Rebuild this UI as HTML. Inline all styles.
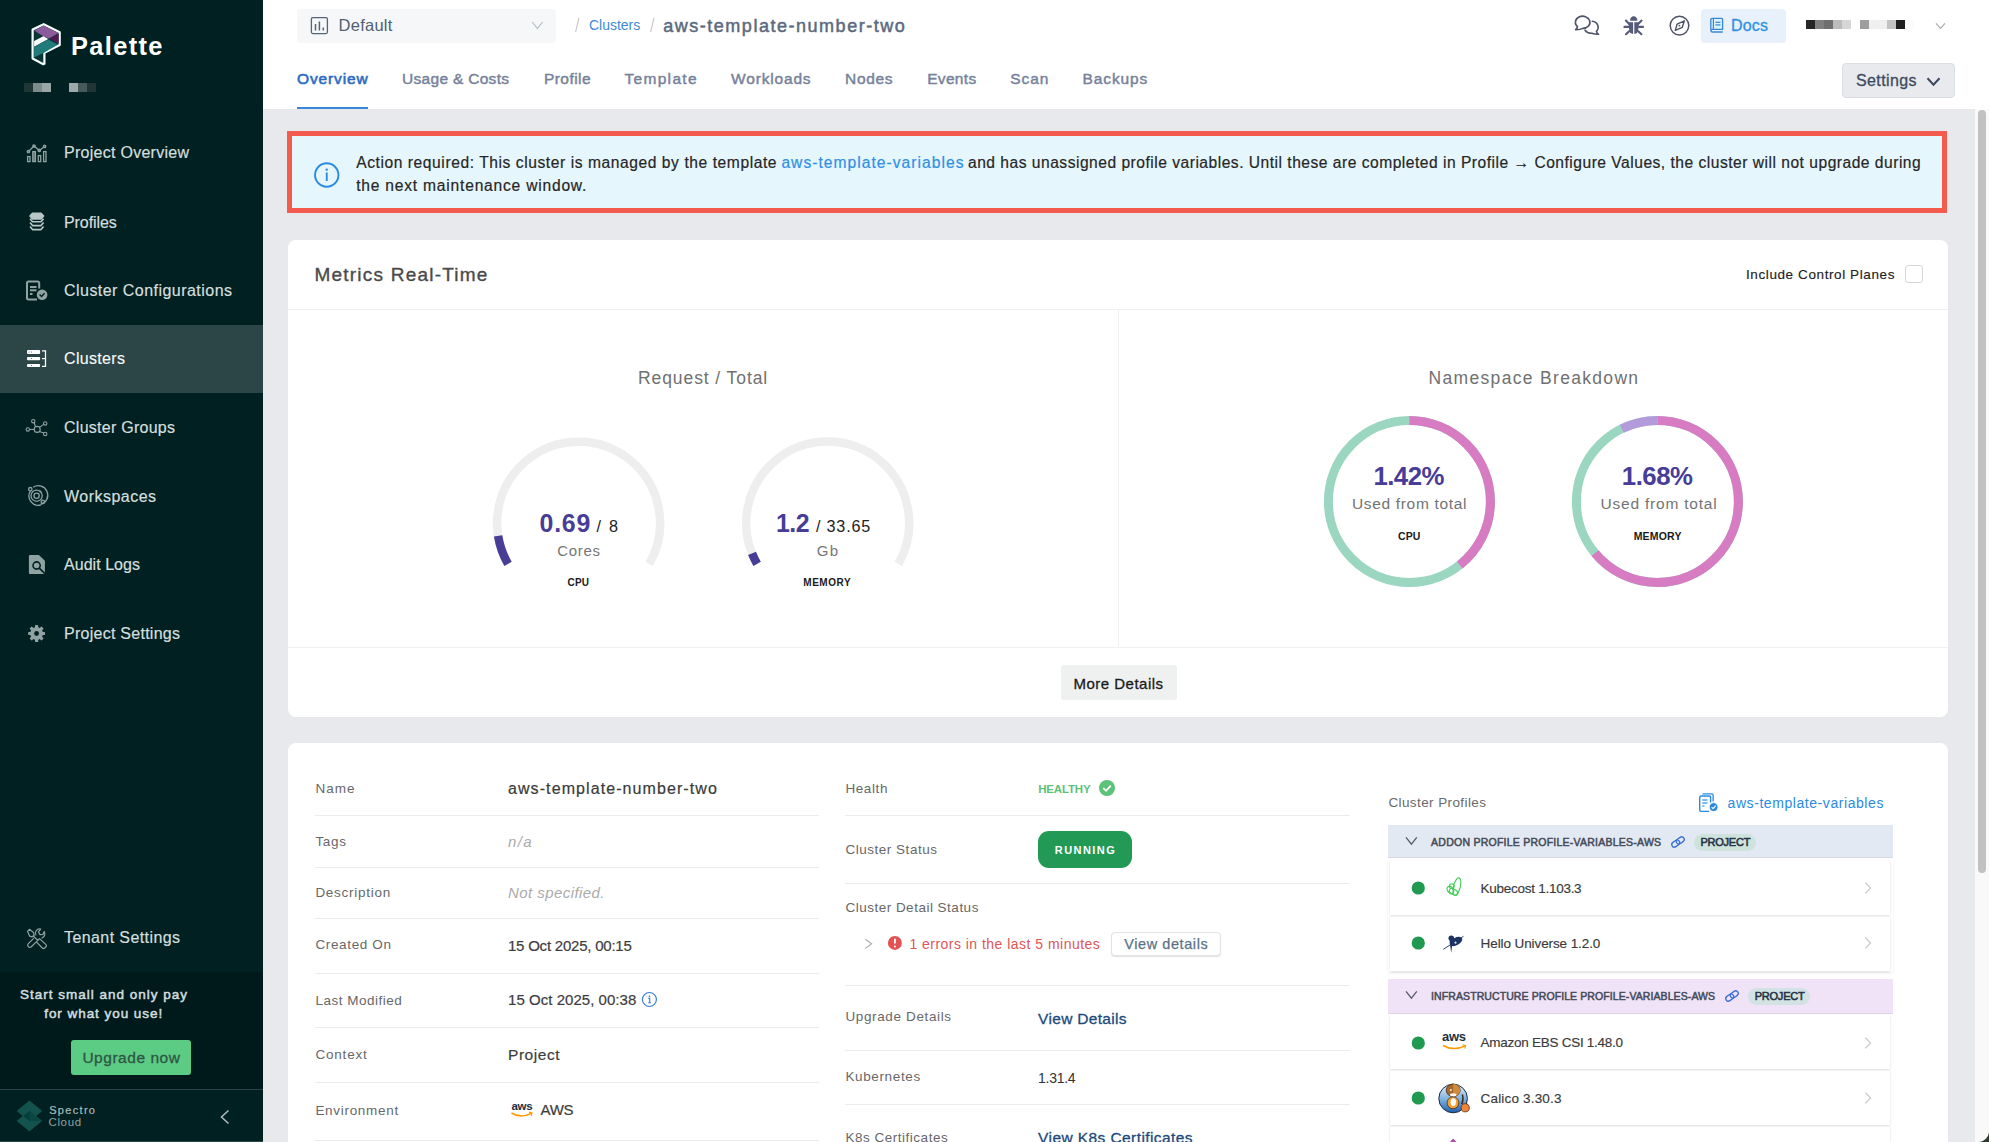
<!DOCTYPE html>
<html><head><meta charset="utf-8">
<style>
*{box-sizing:border-box;margin:0;padding:0}
html,body{width:1989px;height:1142px;overflow:hidden}
body{font-family:"Liberation Sans",sans-serif;background:#e8e9ed;position:relative}
.a{position:absolute;white-space:nowrap}
.t{line-height:20px}
#sb{left:0;top:0;width:263px;height:1142px;background:#012022}
.nav{color:#d3dfdd;font-size:16px;left:64px;margin-top:1px;-webkit-text-stroke:.2px #d3dfdd}
#hdr{left:263px;top:0;width:1726px;height:109px;background:#fff}
.tab{font-size:15.5px;color:#76829a;-webkit-text-stroke:.45px #76829a;top:69px}
.card{background:#fff;border-radius:8px}
.lbl{font-size:14px;color:#6b6b6b}
.val{font-size:15.5px;color:#3d3d3d}
.hr{height:1px;background:#ececec}
</style></head><body>

<!-- SIDEBAR -->
<div id="sb" class="a">
  <div class="a" style="left:0;top:325px;width:263px;height:68px;background:#2c4547"></div>
  <div class="a" style="left:0;top:972px;width:263px;height:117px;background:#001a1c"></div>
  <div class="a" style="left:0;top:1089px;width:263px;height:1px;background:#2b4546"></div>
  <svg class="a" style="left:0;top:0" width="263" height="1142" viewBox="0 0 263 1142">
    <!-- logo -->
    <polygon points="43.7,24.2 59.7,32.3 59.7,44.9 44.4,52.8 44.4,63.8 43.3,64.2 32.6,58.5 32.6,29.4" fill="#0b3436" stroke="#f4ffff" stroke-width="2.2" stroke-linejoin="round"></polygon>
    <polygon points="34.1,30.5 43.7,25.5 58.6,33.1 49,38.6 43.3,36.2" fill="#8a5c9c"></polygon>
    <polygon points="58.6,33.6 58.6,43.6 49.6,38.8" fill="#521a55"></polygon>
    <polygon points="34.1,41 43.3,36.2 48.3,38.9 34.1,46.8" fill="#fbffff"></polygon>
    <polygon points="34.1,47.1 48.3,39.5 58,44.5 44.4,52.4 34.1,57.6" fill="#217b7a"></polygon>
    <!-- project overview -->
    <g fill="none" stroke="#8fa3a3" stroke-width="1.3">
      <rect x="27.6" y="156.6" width="2.4" height="5"></rect>
      <rect x="32.8" y="151.6" width="2.6" height="10" fill="#5c7373"></rect>
      <rect x="38.3" y="155.6" width="2.4" height="6"></rect>
      <rect x="43.6" y="151.6" width="2.4" height="10"></rect>
      <polyline points="28.4,151.6 34,146 39.3,150.4 44.6,146.4"></polyline>
      <circle cx="28.4" cy="151.6" r="1.2"></circle><circle cx="34" cy="146" r="1.2"></circle><circle cx="39.3" cy="150.4" r="1.2"></circle><circle cx="44.6" cy="146.4" r="1.2"></circle>
    </g>
    <!-- profiles -->
    <g fill="none" stroke="#b9c7c6" stroke-width="1.6" stroke-linejoin="round">
      <polygon points="32.5,213.3 41,213.3 43.6,216 41,219 32.5,219 30,216" fill="#b9c7c6"></polygon>
      <polyline points="30,218.8 32.5,221.8 41,221.8 43.6,218.8"></polyline>
      <polyline points="30,222.6 32.5,225.6 41,225.6 43.6,222.6"></polyline>
      <polyline points="30,226.4 32.5,229.6 41,229.6 43.6,226.4"></polyline>
    </g>
    <!-- cluster configurations -->
    <g stroke="#8fa3a3" fill="none" stroke-width="2">
      <path d="M39.2,288.5 V283 a1.5,1.5 0 0 0 -1.5,-1.5 H28.5 a1.5,1.5 0 0 0 -1.5,1.5 V298 a1.5,1.5 0 0 0 1.5,1.5 H37"></path>
      <line x1="30" y1="287" x2="36.5" y2="287"></line><line x1="30" y1="290.3" x2="36.5" y2="290.3"></line><line x1="30" y1="294" x2="32.5" y2="294"></line>
    </g>
    <circle cx="42.1" cy="294.7" r="5.3" fill="#8fa3a3"></circle>
    <polyline points="39.6,294.6 41.5,296.5 44.6,293.2" fill="none" stroke="#012022" stroke-width="1.4"></polyline>
    <!-- clusters -->
    <g fill="#ffffff">
      <rect x="27" y="350.1" width="13.1" height="3.9" rx="1"></rect>
      <rect x="27" y="356.9" width="13.1" height="3.3" rx="1"></rect>
      <rect x="27" y="363.9" width="13.1" height="3.1" rx="1"></rect>
    </g>
    <g fill="#2c4547"><circle cx="29" cy="352" r=".5"></circle><circle cx="31.4" cy="352" r=".5"></circle><circle cx="31.4" cy="358.5" r=".5"></circle><circle cx="31.4" cy="365.5" r=".5"></circle></g>
    <polyline points="42,350.8 45.5,350.8 45.5,366.4 42,366.4" fill="none" stroke="#fff" stroke-width="1.3"></polyline>
    <line x1="42" y1="358.6" x2="45.5" y2="358.6" stroke="#fff" stroke-width="1.2"></line>
    <!-- cluster groups -->
    <g fill="none" stroke="#8fa3a3" stroke-width="1.1">
      <circle cx="37.2" cy="429.4" r="3"></circle>
      <circle cx="27.8" cy="429.4" r="1.7"></circle><circle cx="33.3" cy="421.2" r="1.7"></circle><circle cx="45.2" cy="423.4" r="1.7"></circle><circle cx="45.2" cy="434" r="1.7"></circle>
      <line x1="29.5" y1="429.4" x2="34.2" y2="429.4"></line><line x1="34.1" y1="422.8" x2="35.6" y2="426.8"></line><line x1="43.8" y1="424.4" x2="39.4" y2="427.4"></line><line x1="39.5" y1="431.5" x2="43.8" y2="433"></line>
    </g>
    <!-- workspaces -->
    <g fill="none" stroke="#8fa3a3" stroke-width="1.3">
      <path d="M33.2,487.3 A9.4,9.4 0 1 1 40.5,504.3"></path>
      <path d="M30.5,490.8 A9.4,9.4 0 0 0 40.8,505"></path>
      <circle cx="36.6" cy="495.7" r="5.6"></circle>
      <circle cx="36.6" cy="495.7" r="2.6"></circle>
      <circle cx="30.3" cy="489.2" r="1.7"></circle><circle cx="42.8" cy="501.8" r="1.7"></circle>
    </g>
    <circle cx="40.3" cy="491.5" r="1.1" fill="#8fa3a3"></circle>
    <!-- audit logs -->
    <path d="M30,554.9 H38.9 L44.9,560.8 V572.7 L43.5,574.1 H30 a1.2,1.2 0 0 1 -1.1,-1.2 V556 a1.2,1.2 0 0 1 1.1,-1.1 Z" fill="#8fa3a3"></path>
    <circle cx="36.6" cy="565.5" r="3.6" fill="none" stroke="#012022" stroke-width="1.6"></circle>
    <line x1="39.2" y1="568.1" x2="44.5" y2="573.2" stroke="#012022" stroke-width="1.6"></line>
    <!-- gear -->
    <g transform="translate(36.6,633.5)" fill="#8fa3a3">
      <circle r="6.4"></circle>
      <g id="teeth">
        <rect x="-1.6" y="-8.4" width="3.2" height="3.5" rx=".5"></rect>
        <rect x="-1.6" y="-8.4" width="3.2" height="3.5" rx=".5" transform="rotate(45)"></rect>
        <rect x="-1.6" y="-8.4" width="3.2" height="3.5" rx=".5" transform="rotate(90)"></rect>
        <rect x="-1.6" y="-8.4" width="3.2" height="3.5" rx=".5" transform="rotate(135)"></rect>
        <rect x="-1.6" y="-8.4" width="3.2" height="3.5" rx=".5" transform="rotate(180)"></rect>
        <rect x="-1.6" y="-8.4" width="3.2" height="3.5" rx=".5" transform="rotate(225)"></rect>
        <rect x="-1.6" y="-8.4" width="3.2" height="3.5" rx=".5" transform="rotate(270)"></rect>
        <rect x="-1.6" y="-8.4" width="3.2" height="3.5" rx=".5" transform="rotate(315)"></rect>
      </g>
      <circle r="2.4" fill="#012022"></circle>
    </g>
    <!-- tenant settings -->
    <g fill="none" stroke="#8fa3a3" stroke-width="1.2" stroke-linejoin="round" stroke-linecap="round">
      <path d="M27.6,931.4 L29.4,929.3 L33.5,932.5 L34.2,935 L32.2,936.9 L29.7,936.2 Z"></path>
      <line x1="33.2" y1="936" x2="37.8" y2="940.3"></line>
      <path d="M37.8,940.3 L39.5,938.6 L46,944.6 a1.6,1.6 0 0 1 0,2.2 L44.6,948 a1.6,1.6 0 0 1 -2.2,0 L36.3,941.8 Z"></path>
      <path d="M35.8,934.9 a4.2,4.2 0 0 1 4.9,-5.8 l-2.3,2.8 l1.6,2.7 l3,-.3 l1.2,-2.8 a4.4,4.4 0 0 1 -2.3,6.5"></path>
      <path d="M33.4,938.6 L28.3,943.6 a2.2,2.2 0 0 0 3,3.2 L35.8,942.4"></path>
    </g>
    <!-- spectro cloud logo -->
    <polygon points="29.4,1101 41.6,1110.9 29.4,1120.9 17.2,1110.9" fill="#13524f" stroke="#13524f" stroke-width="1" stroke-linejoin="round"></polygon>
    <polygon points="29.4,1111 41.6,1120.9 29.4,1130.9 17.2,1120.9" fill="#13524f" stroke="#13524f" stroke-width="1" stroke-linejoin="round"></polygon>
    <polygon points="17.2,1110.9 23.3,1115.9 29.4,1111 35.5,1115.9 29.4,1120.9" fill="#043f3d"></polygon>
    <polygon points="29.4,1111 35.5,1115.9 41.6,1120.9 29.4,1120.9" fill="#0a4744"></polygon>
    <polyline points="228.5,1110.5 221.5,1117 228.5,1123.5" fill="none" stroke="#a9b9b8" stroke-width="1.6"></polyline>
  </svg>
  <div class="a t" style="left: 71px; top: 34px; line-height: 24px; font-size: 25.4px; font-weight: bold; color: rgb(255, 255, 255); letter-spacing: 1.372px;">Palette</div>
  <div class="a" style="left:24px;top:83px;width:9px;height:9px;background:#1f3536"></div>
  <div class="a" style="left:33px;top:83px;width:9px;height:9px;background:#7d8b8b"></div>
  <div class="a" style="left:42px;top:83px;width:9px;height:9px;background:#9aa5a5"></div>
  <div class="a" style="left:69px;top:83px;width:9px;height:9px;background:#9ea9a9"></div>
  <div class="a" style="left:78px;top:83px;width:9px;height:9px;background:#475a5b"></div>
  <div class="a" style="left:87px;top:83px;width:9px;height:9px;background:#1f3536"></div>
  <div class="a t nav" style="top: 142.4px; letter-spacing: 0.272px;">Project Overview</div>
  <div class="a t nav" style="top: 211.5px; letter-spacing: -0.08px;">Profiles</div>
  <div class="a t nav" style="top: 279.5px; letter-spacing: 0.462px;">Cluster Configurations</div>
  <div class="a t nav" style="top: 348.3px; color: rgb(255, 255, 255); letter-spacing: 0.33px;">Clusters</div>
  <div class="a t nav" style="top: 417px; letter-spacing: 0.262px;">Cluster Groups</div>
  <div class="a t nav" style="top: 485.6px; letter-spacing: 0.474px;">Workspaces</div>
  <div class="a t nav" style="top: 554.3px; letter-spacing: 0.043px;">Audit Logs</div>
  <div class="a t nav" style="top: 622.5px; letter-spacing: 0.263px;">Project Settings</div>
  <div class="a t nav" style="top: 927.3px; letter-spacing: 0.407px;">Tenant Settings</div>
  <div class="a t" style="left: 20px; top: 985.3px; font-size: 13.5px; color: rgb(211, 221, 221); -webkit-text-stroke: 0.5px rgb(211, 221, 221); letter-spacing: 0.997px;">Start small and only pay</div>
  <div class="a t" style="left: 44.2px; top: 1004px; font-size: 13.5px; color: rgb(211, 221, 221); -webkit-text-stroke: 0.5px rgb(211, 221, 221); letter-spacing: 0.949px;">for what you use!</div>
  <div class="a" style="left:71px;top:1040px;width:120px;height:35px;background:#5ccb84;border-radius:3px"></div>
  <div class="a t" style="left: 82.4px; top: 1047.5px; font-size: 15.5px; color: rgb(44, 86, 69); -webkit-text-stroke: 0.3px rgb(44, 86, 69); letter-spacing: 0.53px;">Upgrade now</div>
  <div class="a t" style="left: 49.2px; top: 1100.2px; font-size: 11px; color: rgb(168, 188, 187); -webkit-text-stroke: 0.2px rgb(168, 188, 187); letter-spacing: 1.313px;">Spectro</div>
  <div class="a t" style="left: 48.4px; top: 1112.25px; font-size: 11.5px; color: rgb(142, 163, 162); letter-spacing: 0.684px;">Cloud</div>
  <div class="a" style="left:0;top:1141px;width:263px;height:1px;background:#2a4846"></div>
</div>

<!-- HEADER -->
<div id="hdr" class="a"></div>
<div class="a" style="left:297px;top:9px;width:259px;height:34px;background:#f5f7f9;border-radius:3px"></div>
<svg class="a" style="left:263px;top:0" width="1726" height="109" viewBox="263 0 1726 109">
  <!-- default icon -->
  <rect x="311.4" y="17.6" width="16" height="16" rx="1.5" fill="none" stroke="#56637a" stroke-width="1.3"></rect>
  <line x1="315.5" y1="24" x2="315.5" y2="30.5" stroke="#56637a" stroke-width="1.5"></line>
  <line x1="319.4" y1="21.5" x2="319.4" y2="30.5" stroke="#56637a" stroke-width="1.5"></line>
  <line x1="323.3" y1="27.5" x2="323.3" y2="30.5" stroke="#56637a" stroke-width="1.5"></line>
  <polyline points="532.2,22 537.4,28.6 542.6,22" fill="none" stroke="#b5bcc6" stroke-width="1.2"></polyline>
  <line x1="579" y1="17.7" x2="575.6" y2="32.1" stroke="#c9c9c9" stroke-width="1.2"></line>
  <line x1="654" y1="17.7" x2="650.6" y2="32.1" stroke="#c9c9c9" stroke-width="1.2"></line>
  <!-- chat -->
  <g fill="none" stroke="#4e5468" stroke-width="1.6" stroke-linejoin="round" stroke-linecap="round">
    <path d="M1577.5,26.6 A7.3,6.1 0 1 1 1582.8,28.4 Q1580,29.8 1575.6,29.7 Q1577.2,28.3 1577.5,26.6 Z"></path>
    <path d="M1592.3,21.2 A6.4,6.1 0 0 1 1596.4,31.4 Q1597,33.2 1598.6,34.3 Q1594.4,34.4 1592,33.3 Q1587.5,33.5 1585,30.2"></path>
  </g>
  <!-- bug -->
  <g fill="#555a78">
    <path d="M1630,20.8 A3.7,4.6 0 0 1 1637.4,20.8 Z"></path>
    <path d="M1628.4,22.2 H1633.1 V33.9 L1630.2,33 Q1628.5,28.5 1628.4,22.2 Z"></path>
    <path d="M1639,22.2 H1634.3 V33.9 L1637.2,33 Q1638.9,28.5 1639,22.2 Z"></path>
  </g>
  <g stroke="#555a78" stroke-width="2.1" stroke-linecap="round">
    <line x1="1625.9" y1="20.6" x2="1629.2" y2="23.9"></line><line x1="1641.5" y1="20.6" x2="1638.2" y2="23.9"></line>
    <line x1="1624.4" y1="26.9" x2="1628.4" y2="26.9"></line><line x1="1643" y1="26.9" x2="1639" y2="26.9"></line>
    <line x1="1626" y1="34.2" x2="1629.4" y2="31"></line><line x1="1641.4" y1="34.2" x2="1638" y2="31"></line>
  </g>
  <!-- compass -->
  <circle cx="1679.5" cy="25.6" r="9.3" fill="none" stroke="#4e5468" stroke-width="1.5"></circle>
  <path d="M1684.4,20.8 L1682.3,27.3 L1675.3,30.4 L1677.1,24.2 Z" fill="none" stroke="#4e5468" stroke-width="1.4" stroke-linejoin="round"></path>
  <circle cx="1679.5" cy="25.6" r=".9" fill="#4e5468"></circle>
</svg>
<div class="a" style="left:1701px;top:9px;width:85px;height:34px;background:#e8f0fb;border-radius:4px"></div>
<svg class="a" style="left:1705px;top:14px" width="24" height="24" viewBox="1705 14 24 24">
  <path d="M1710.8,30.4 V19.6 a1.2,1.2 0 0 1 1.2,-1.2 H1721.4 a1.2,1.2 0 0 1 1.2,1.2 V29.4 H1712.3 a1.3,1.3 0 0 0 0,2.6 H1722.8" fill="#d7f2fd" stroke="#3a86d0" stroke-width="1.3"></path>
  <line x1="1713.4" y1="18.6" x2="1713.4" y2="29.2" stroke="#3a86d0" stroke-width="1.2"></line>
  <line x1="1715.4" y1="22.3" x2="1720.4" y2="22.3" stroke="#3a86d0" stroke-width="1.2"></line>
  <line x1="1715.4" y1="24.9" x2="1720.4" y2="24.9" stroke="#4a96e0" stroke-width="1.4"></line>
</svg>
<div class="a t" style="left: 1731px; top: 16.4px; font-size: 16px; color: rgb(48, 144, 224); -webkit-text-stroke: 0.3px rgb(48, 144, 224); letter-spacing: 0.182px;">Docs</div>
<div class="a" style="left:1806px;top:20px;width:9px;height:9px;background:#252525"></div>
<div class="a" style="left:1815px;top:20px;width:9px;height:9px;background:#7f7f7f"></div>
<div class="a" style="left:1824px;top:20px;width:9px;height:9px;background:#707070"></div>
<div class="a" style="left:1833px;top:20px;width:9px;height:9px;background:#bcbcbc"></div>
<div class="a" style="left:1842px;top:20px;width:9px;height:9px;background:#d6d6d6"></div>
<div class="a" style="left:1860px;top:20px;width:9px;height:9px;background:#9d9d9d"></div>
<div class="a" style="left:1869px;top:20px;width:18px;height:9px;background:#efefef"></div>
<div class="a" style="left:1887px;top:20px;width:9px;height:9px;background:#c2c2c2"></div>
<div class="a" style="left:1896px;top:20px;width:9px;height:9px;background:#1f1f1f"></div>
<div class="a" style="left:1905px;top:20px;width:9px;height:9px;background:#fbfbfb"></div>
<svg class="a" style="left:1930px;top:18px" width="20" height="16" viewBox="1930 18 20 16">
  <polyline points="1936,23.4 1940.5,28.4 1945,23.4" fill="none" stroke="#a8a8a8" stroke-width="1.1"></polyline>
</svg>
<div class="a t" style="left: 338.6px; top: 15.3px; font-size: 16.5px; color: rgb(83, 95, 115); letter-spacing: 0.236px;">Default</div>
<div class="a t" style="left: 589px; top: 15.4px; font-size: 14px; color: rgb(63, 138, 216); letter-spacing: -0.023px;">Clusters</div>
<div class="a t" style="left: 663.2px; top: 15.8px; font-size: 18px; color: rgb(91, 106, 128); -webkit-text-stroke: 0.5px rgb(91, 106, 128); letter-spacing: 1.524px;">aws-template-number-two</div>
<!-- tabs -->
<div class="a t tab" style="left: 297px; color: rgb(43, 108, 196); -webkit-text-stroke: 0.6px rgb(43, 108, 196); letter-spacing: 0.884px;">Overview</div>
<div class="a" style="left:297px;top:107px;width:71px;height:2px;background:#3789d8"></div>
<div class="a t tab" style="left: 402px; letter-spacing: 0.301px;">Usage &amp; Costs</div>
<div class="a t tab" style="left: 544px; letter-spacing: 0.427px;">Profile</div>
<div class="a t tab" style="left: 624.4px; letter-spacing: 1.328px;">Template</div>
<div class="a t tab" style="left: 731px; letter-spacing: 0.833px;">Workloads</div>
<div class="a t tab" style="left: 845px; letter-spacing: 0.697px;">Nodes</div>
<div class="a t tab" style="left: 927.2px; letter-spacing: 0.322px;">Events</div>
<div class="a t tab" style="left: 1010.2px; letter-spacing: 0.985px;">Scan</div>
<div class="a t tab" style="left: 1082.6px; letter-spacing: 0.874px;">Backups</div>
<div class="a" style="left:1842px;top:63px;width:113px;height:35px;background:#e8eaee;border:1px solid #dadde2;border-radius:4px"></div>
<div class="a t" style="left: 1856px; top: 70.5px; font-size: 16px; color: rgb(61, 74, 92); -webkit-text-stroke: 0.3px rgb(61, 74, 92); letter-spacing: 0.384px;">Settings</div>
<svg class="a" style="left:1920px;top:70px" width="26" height="22" viewBox="1920 70 26 22">
  <polyline points="1927.5,78.3 1933.5,84.8 1939.5,78.3" fill="none" stroke="#3d4a5c" stroke-width="2"></polyline>
</svg>

<!-- scrollbar -->
<div class="a" style="left:1975px;top:109px;width:14px;height:1033px;background:#f9f9f9"></div>
<div class="a" style="left:1978px;top:110px;width:8px;height:763px;background:#c1c1c1;border-radius:4px"></div>

<!-- ALERT -->
<div class="a" style="left:287px;top:131px;width:1660px;height:82px;border:5px solid #f25b4e;background:#e6f6fd"></div>
<svg class="a" style="left:310px;top:159px" width="34" height="34" viewBox="310 159 34 34">
  <circle cx="326.75" cy="175" r="11.7" fill="none" stroke="#2a8be0" stroke-width="1.9"></circle>
  <circle cx="326.75" cy="169.6" r="1.2" fill="#2a8be0"></circle>
  <line x1="326.75" y1="172.5" x2="326.75" y2="181" stroke="#2a8be0" stroke-width="1.9"></line>
</svg>
<div class="a t" style="left: 356.2px; top: 152.75px; font-size: 15.6px; color: rgb(38, 38, 38); -webkit-text-stroke: 0.2px rgb(38, 38, 38); letter-spacing: 0.571px;">Action required: This cluster is managed by the template</div>
<div class="a t" style="left: 781.4px; top: 152.75px; font-size: 15.6px; color: rgb(47, 143, 230); -webkit-text-stroke: 0.2px rgb(47, 143, 230); letter-spacing: 1.036px;">aws-template-variables</div>
<div class="a t" style="left: 968px; top: 152.75px; font-size: 15.6px; color: rgb(38, 38, 38); -webkit-text-stroke: 0.2px rgb(38, 38, 38); letter-spacing: 0.5px;">and has unassigned profile variables. Until these are completed in Profile → Configure Values, the cluster will not upgrade during</div>
<div class="a t" style="left: 356.2px; top: 175.85px; font-size: 15.6px; color: rgb(38, 38, 38); -webkit-text-stroke: 0.2px rgb(38, 38, 38); letter-spacing: 0.788px;">the next maintenance window.</div>

<!-- METRICS CARD -->
<div class="a card" style="left:288px;top:240px;width:1660px;height:477px"></div>
<div class="a" style="left:288px;top:309px;width:1660px;height:1px;background:#efefef"></div>
<div class="a" style="left:1118px;top:310px;width:1px;height:337px;background:#efefef"></div>
<div class="a" style="left:288px;top:647px;width:1660px;height:1px;background:#f1f1f1"></div>
<div class="a t" style="left: 314.4px; top: 265.1px; font-size: 19px; color: rgb(74, 74, 74); -webkit-text-stroke: 0.35px rgb(74, 74, 74); letter-spacing: 1.224px;">Metrics Real-Time</div>
<div class="a t" style="left: 1746px; top: 265.2px; font-size: 13.5px; color: rgb(34, 34, 34); -webkit-text-stroke: 0.15px rgb(34, 34, 34); letter-spacing: 0.598px;">Include Control Planes</div>
<div class="a" style="left:1905px;top:265px;width:18px;height:18px;border:1px solid #d6d6d6;border-radius:3px;background:#fff"></div>
<div class="a t" style="left: 638px; top: 367.9px; font-size: 17.5px; color: rgb(112, 112, 112); letter-spacing: 0.913px;">Request / Total</div>
<div class="a t" style="left: 1428.6px; top: 367.75px; font-size: 17.5px; color: rgb(112, 112, 112); letter-spacing: 1.317px;">Namespace Breakdown</div>
<svg class="a" style="left:288px;top:310px" width="1660" height="337" viewBox="288 310 1660 337">
  <path d="M508.02,563.95 A81.5,81.5 0 1 1 649.18,563.95" fill="none" stroke="#eeeeee" stroke-width="8.5"></path>
  <path d="M508.02,563.95 A81.5,81.5 0 0 1 498.10,535.95" fill="none" stroke="#473d97" stroke-width="8.5"></path>
  <path d="M757.12,563.85 A81.5,81.5 0 1 1 898.28,563.85" fill="none" stroke="#eeeeee" stroke-width="8.5"></path>
  <path d="M757.12,563.85 A81.5,81.5 0 0 1 752.03,553.37" fill="none" stroke="#473d97" stroke-width="8.5"></path>
  <circle cx="1409.4" cy="501.5" r="81" fill="none" stroke="#9ad6c0" stroke-width="9"></circle>
  <circle cx="1409.4" cy="501.5" r="81" fill="none" stroke="#d77cc3" stroke-width="9" stroke-dasharray="199.76 508.94" stroke-dashoffset="0.00" transform="rotate(-90 1409.4 501.5)"></circle>
  <circle cx="1657.4" cy="501.5" r="81" fill="none" stroke="#9ad6c0" stroke-width="9"></circle>
  <circle cx="1657.4" cy="501.5" r="81" fill="none" stroke="#d77cc3" stroke-width="9" stroke-dasharray="325.15 508.94" stroke-dashoffset="0.00" transform="rotate(-90 1657.4 501.5)"></circle>
  <circle cx="1657.4" cy="501.5" r="81" fill="none" stroke="#b39bdb" stroke-width="9" stroke-dasharray="37.60 508.94" stroke-dashoffset="-471.33" transform="rotate(-90 1657.4 501.5)"></circle>
</svg>
<div class="a t" style="left: 539.6px; top: 512.7px; font-size: 24.9px; font-weight: bold; color: rgb(71, 61, 151); letter-spacing: 0.749px;">0.69</div>
<div class="a t" style="left: 596.6px; top: 515.8px; font-size: 16.2px; color: rgb(34, 34, 34); letter-spacing: 1.65px;">/ 8</div>
<div class="a t" style="left: 557.2px; top: 541.15px; font-size: 15px; color: rgb(119, 119, 119); letter-spacing: 0.721px;">Cores</div>
<div class="a t" style="left: 567.5px; top: 573.45px; font-size: 10px; font-weight: bold; color: rgb(26, 26, 26); letter-spacing: 0.188px;">CPU</div>
<div class="a t" style="left: 775.99px; top: 512.7px; font-size: 24.9px; font-weight: bold; color: rgb(71, 61, 151); letter-spacing: -0.498px;">1.2</div>
<div class="a t" style="left: 815.9px; top: 515.8px; font-size: 16.2px; color: rgb(34, 34, 34); letter-spacing: 0.814px;">/ 33.65</div>
<div class="a t" style="left: 816.7px; top: 541.15px; font-size: 15px; color: rgb(119, 119, 119); letter-spacing: 1.284px;">Gb</div>
<div class="a t" style="left: 803.3px; top: 573.45px; font-size: 10px; font-weight: bold; color: rgb(26, 26, 26); letter-spacing: 0.532px;">MEMORY</div>
<div class="a t" style="left: 1373.4px; top: 465.75px; font-size: 25.8px; font-weight: bold; color: rgb(71, 61, 151); letter-spacing: -0.516px;">1.42%</div>
<div class="a t" style="left: 1352px; top: 494.25px; font-size: 15.5px; color: rgb(115, 115, 115); letter-spacing: 0.664px;">Used from total</div>
<div class="a t" style="left: 1398px; top: 526.3px; font-size: 10.5px; font-weight: bold; color: rgb(26, 26, 26); letter-spacing: 0.064px;">CPU</div>
<div class="a t" style="left: 1621.85px; top: 465.75px; font-size: 25.8px; font-weight: bold; color: rgb(71, 61, 151); letter-spacing: -0.516px;">1.68%</div>
<div class="a t" style="left: 1600.6px; top: 494.25px; font-size: 15.5px; color: rgb(115, 115, 115); letter-spacing: 0.785px;">Used from total</div>
<div class="a t" style="left: 1633.7px; top: 526.3px; font-size: 10.5px; font-weight: bold; color: rgb(26, 26, 26); letter-spacing: 0.185px;">MEMORY</div>
<div class="a" style="left:1060.5px;top:665.2px;width:116.3px;height:34.7px;background:#eff0f0;border-radius:3px"></div>
<div class="a t" style="left: 1073.4px; top: 674.2px; font-size: 15px; color: rgb(26, 26, 26); -webkit-text-stroke: 0.3px rgb(26, 26, 26); letter-spacing: 0.5px;">More Details</div>

<!-- DETAILS CARD -->
<div class="a card" style="left:288px;top:743px;width:1660px;height:420px"></div>
<div class="a t" style="left: 315.4px; top: 779.2px; font-size: 13.5px; color: rgb(104, 104, 104); letter-spacing: 0.995px;">Name</div>
<div class="a t" style="left: 315.4px; top: 831.65px; font-size: 13.5px; color: rgb(104, 104, 104); letter-spacing: 0.69px;">Tags</div>
<div class="a t" style="left: 315.4px; top: 882.6px; font-size: 13.5px; color: rgb(104, 104, 104); letter-spacing: 0.727px;">Description</div>
<div class="a t" style="left: 315.4px; top: 935.15px; font-size: 13.5px; color: rgb(104, 104, 104); letter-spacing: 0.645px;">Created On</div>
<div class="a t" style="left: 315.4px; top: 990.5px; font-size: 13.5px; color: rgb(104, 104, 104); letter-spacing: 0.509px;">Last Modified</div>
<div class="a t" style="left: 315.4px; top: 1045.3px; font-size: 13.5px; color: rgb(104, 104, 104); letter-spacing: 0.811px;">Context</div>
<div class="a t" style="left: 315.4px; top: 1101.2px; font-size: 13.5px; color: rgb(104, 104, 104); letter-spacing: 0.7px;">Environment</div>
<div class="a hr" style="left:315px;top:815px;width:504px"></div>
<div class="a hr" style="left:315px;top:867px;width:504px"></div>
<div class="a hr" style="left:315px;top:918px;width:504px"></div>
<div class="a hr" style="left:315px;top:973px;width:504px"></div>
<div class="a hr" style="left:315px;top:1027px;width:504px"></div>
<div class="a hr" style="left:315px;top:1082px;width:504px"></div>
<div class="a hr" style="left:315px;top:1140px;width:504px"></div>
<div class="a t" style="left: 508px; top: 779.2px; font-size: 16px; color: rgb(58, 58, 58); -webkit-text-stroke: 0.2px rgb(58, 58, 58); letter-spacing: 1.084px;">aws-template-number-two</div>
<div class="a t" style="left: 508px; top: 831.8px; font-size: 15px; color: rgb(170, 170, 170); font-style: italic; letter-spacing: 1.37px;">n/a</div>
<div class="a t" style="left: 508px; top: 883px; font-size: 15px; color: rgb(170, 170, 170); font-style: italic; letter-spacing: 0.431px;">Not specified.</div>
<div class="a t" style="left: 508px; top: 935.6px; font-size: 15px; color: rgb(61, 61, 61); -webkit-text-stroke: 0.2px rgb(61, 61, 61); letter-spacing: -0.224px;">15 Oct 2025, 00:15</div>
<div class="a t" style="left: 508px; top: 990.25px; font-size: 15px; color: rgb(61, 61, 61); -webkit-text-stroke: 0.2px rgb(61, 61, 61); letter-spacing: 0.041px;">15 Oct 2025, 00:38</div>
<div class="a t" style="left: 508px; top: 1044.55px; font-size: 15.5px; color: rgb(61, 61, 61); -webkit-text-stroke: 0.2px rgb(61, 61, 61); letter-spacing: 0.542px;">Project</div>
<div class="a t" style="left: 540.6px; top: 1100.35px; font-size: 15px; color: rgb(61, 61, 61); -webkit-text-stroke: 0.2px rgb(61, 61, 61); letter-spacing: -0.3px;">AWS</div>
<svg class="a" style="left:500px;top:985px" width="80" height="140" viewBox="500 985 80 140">
  <circle cx="649.4" cy="999.5" r="7" fill="none" stroke="#3a7fd0" stroke-width="1.2"></circle>
  <circle cx="649.4" cy="996.2" r=".8" fill="#3a7fd0"></circle>
  <line x1="649.4" y1="998" x2="649.4" y2="1003" stroke="#3a7fd0" stroke-width="1.2"></line>
</svg>
<svg class="a" style="left:640px;top:990px" width="20" height="20" viewBox="640 990 20 20">
  <circle cx="649.4" cy="999.5" r="7" fill="none" stroke="#3a7fd0" stroke-width="1.2"></circle>
  <circle cx="649.4" cy="996.3" r=".85" fill="#3a7fd0"></circle>
  <path d="M648.3,998.4 H649.7 V1002.8 M648.2,1002.8 H650.9" fill="none" stroke="#3a7fd0" stroke-width="1.1"></path>
</svg>
<div class="a" style="left:511.4px;top:1100px;font-size:11.5px;line-height:12px;color:#232f3e;font-weight:bold;letter-spacing:-.3px">aws</div>
<svg class="a" style="left:508px;top:1110px" width="28" height="12" viewBox="508 1110 28 12">
  <path d="M511.5,1113 Q521,1119 531,1113.3" fill="none" stroke="#f90" stroke-width="1.5"></path>
  <path d="M529,1112.2 L532,1113 L531.2,1115.8" fill="none" stroke="#f90" stroke-width="1.2"></path>
</svg>
<div class="a t" style="left: 845.4px; top: 778.5px; font-size: 13.5px; color: rgb(104, 104, 104); letter-spacing: 0.594px;">Health</div>
<div class="a t" style="left: 845.4px; top: 839.7px; font-size: 13.5px; color: rgb(104, 104, 104); letter-spacing: 0.523px;">Cluster Status</div>
<div class="a t" style="left: 845.4px; top: 898.35px; font-size: 13.5px; color: rgb(104, 104, 104); letter-spacing: 0.497px;">Cluster Detail Status</div>
<div class="a t" style="left: 845.4px; top: 1007.35px; font-size: 13.5px; color: rgb(104, 104, 104); letter-spacing: 0.635px;">Upgrade Details</div>
<div class="a t" style="left: 845.4px; top: 1067.45px; font-size: 13.5px; color: rgb(104, 104, 104); letter-spacing: 0.637px;">Kubernetes</div>
<div class="a t" style="left: 845.4px; top: 1127.5px; font-size: 13.5px; color: rgb(104, 104, 104); letter-spacing: 0.517px;">K8s Certificates</div>
<div class="a hr" style="left:845px;top:815px;width:505px"></div>
<div class="a hr" style="left:845px;top:883px;width:505px"></div>
<div class="a hr" style="left:845px;top:985px;width:505px"></div>
<div class="a hr" style="left:845px;top:1050px;width:505px"></div>
<div class="a hr" style="left:845px;top:1104px;width:505px"></div>
<div class="a t" style="left: 1038.2px; top: 779px; font-size: 11.5px; color: rgb(92, 194, 122); font-weight: bold; letter-spacing: -0.159px;">HEALTHY</div>
<svg class="a" style="left:1095px;top:776px" width="24" height="24" viewBox="1095 776 24 24">
  <circle cx="1107" cy="788" r="8" fill="#5cc27a"></circle>
  <polyline points="1103.3,788.2 1106,790.8 1110.8,785.6" fill="none" stroke="#fff" stroke-width="1.8"></polyline>
</svg>
<div class="a" style="left:1038.2px;top:831px;width:93.6px;height:36.7px;background:#229a55;border-radius:11px"></div>
<div class="a t" style="left: 1054.8px; top: 840.1px; font-size: 11px; color: rgb(255, 255, 255); font-weight: bold; letter-spacing: 1.426px;">RUNNING</div>
<svg class="a" style="left:860px;top:930px" width="50" height="28" viewBox="860 930 50 28">
  <polyline points="865.3,939.2 871.6,943.8 865.3,948.4" fill="none" stroke="#aaaaaa" stroke-width="1.1"></polyline>
  <circle cx="894.9" cy="942.9" r="7" fill="#e25454"></circle>
  <line x1="894.9" y1="938.8" x2="894.9" y2="943.6" stroke="#fff" stroke-width="1.8"></line>
  <circle cx="894.9" cy="946.4" r="1" fill="#fff"></circle>
</svg>
<div class="a t" style="left: 909.4px; top: 934px; font-size: 14px; color: rgb(224, 85, 85); letter-spacing: 0.474px;">1 errors in the last 5 minutes</div>
<div class="a" style="left:1111px;top:931.7px;width:109.7px;height:24px;background:#fff;border:1px solid #e3e3e3;border-radius:4px;box-shadow:0 1px 1px rgba(0,0,0,.12)"></div>
<div class="a t" style="left: 1124.2px; top: 934px; font-size: 14.5px; color: rgb(91, 115, 135); -webkit-text-stroke: 0.25px rgb(91, 115, 135); letter-spacing: 0.581px;">View details</div>
<div class="a t" style="left: 1038.1px; top: 1008.5px; font-size: 15.5px; color: rgb(29, 74, 124); -webkit-text-stroke: 0.3px rgb(29, 74, 124); letter-spacing: 0.317px;">View Details</div>
<div class="a t" style="left: 1038.1px; top: 1067.85px; font-size: 14px; color: rgb(51, 51, 51); letter-spacing: -0.28px;">1.31.4</div>
<div class="a t" style="left: 1038.1px; top: 1127.9px; font-size: 15.5px; color: rgb(29, 74, 124); -webkit-text-stroke: 0.3px rgb(29, 74, 124); letter-spacing: 0.416px;">View K8s Certificates</div>
<div class="a t" style="left: 1388.4px; top: 793.2px; font-size: 13.5px; color: rgb(106, 106, 106); letter-spacing: 0.405px;">Cluster Profiles</div>
<div class="a t" style="left: 1727.6px; top: 793px; font-size: 14px; color: rgb(43, 138, 226); letter-spacing: 0.564px;">aws-template-variables</div>
<svg class="a" style="left:1695px;top:790px" width="24" height="26" viewBox="1695 790 24 26">
  <path d="M1702.5,793.8 H1711.8 a1.3,1.3 0 0 1 1.3,1.3 V801.5" fill="none" stroke="#2a8ae0" stroke-width="1.3"></path>
  <path d="M1709.3,811.4 H1701 a1.3,1.3 0 0 1 -1.3,-1.3 V797.3 a1.3,1.3 0 0 1 1.3,-1.3 H1709.3 a1.3,1.3 0 0 1 1.3,1.3 V802.5" fill="none" stroke="#2a8ae0" stroke-width="1.4"></path>
  <line x1="1702.3" y1="800" x2="1707.5" y2="800" stroke="#2a8ae0" stroke-width="1.2"></line>
  <line x1="1702.3" y1="803" x2="1707.5" y2="803" stroke="#2a8ae0" stroke-width="1.2"></line>
  <line x1="1702.3" y1="806" x2="1704.5" y2="806" stroke="#2a8ae0" stroke-width="1.2"></line>
  <circle cx="1713.6" cy="807.1" r="4.5" fill="#2a8ae0" stroke="#fff" stroke-width="1"></circle>
  <polyline points="1711.6,807.1 1713.1,808.6 1715.8,805.7" fill="none" stroke="#fff" stroke-width="1.1"></polyline>
</svg>
<div class="a" style="left:1388px;top:858.5px;width:504.7px;height:113px;box-shadow:0 1px 3px rgba(0,0,0,.08)"></div>
<div class="a" style="left:1388px;top:825.2px;width:504.7px;height:33.299999999999955px;background:#e3e9f2;box-shadow:inset 0 -1px 0 rgba(0,0,0,.06)"></div>
<svg class="a" style="left:1400px;top:832.25px" width="24" height="20" viewBox="1400 832.25 24 20">
  <polyline points="1406,837.65 1411.4,844.45 1416.8,837.65" fill="none" stroke="#555b6a" stroke-width="1.3"></polyline>
</svg>
<svg class="a" style="left:1669px;top:833.25px" width="20" height="18" viewBox="1669 833.25 20 18">
  <g fill="none" stroke="#3a6fd0" stroke-width="1.3" transform="rotate(-35 1678 842.25)">
    <rect x="1671" y="839.65" width="8.5" height="5.2" rx="2.6"></rect>
    <rect x="1676.5" y="839.65" width="8.5" height="5.2" rx="2.6"></rect>
  </g>
</svg>
<div class="a" style="left:1693.9px;top:833.85px;width:62.59999999999991px;height:17px;border-radius:8.5px;background:#cde3dc"></div>
<div class="a t" style="left: 1431.1px; top: 832.25px; font-size: 10.5px; color: rgb(69, 75, 89); -webkit-text-stroke: 0.5px rgb(69, 75, 89); letter-spacing: 0.244px;">ADDON PROFILE PROFILE-VARIABLES-AWS</div>
<div class="a t" style="left: 1700.4px; top: 832.25px; font-size: 11px; color: rgb(38, 50, 68); -webkit-text-stroke: 0.55px rgb(38, 50, 68); letter-spacing: -0.22px;">PROJECT</div>
<div class="a" style="left:1389.6px;top:860.9px;width:500.5px;height:54.30000000000007px;background:#fff;box-shadow:0 1px 2px rgba(0,0,0,.10),0 0 3px rgba(0,0,0,.05)"></div>
<svg class="a" style="left:1400px;top:868.3px" width="480" height="40" viewBox="1400 868.3 480 40">
  <circle cx="1418.3" cy="888.3" r="6.6" fill="#1f9a50"></circle>
  <polyline points="1865.3,883.0 1870.6,888.3 1865.3,893.5999999999999" fill="none" stroke="#c5c5c5" stroke-width="1.1"></polyline>
  <g fill="none" stroke="#3ecf55" stroke-width="1.1"><ellipse cx="1456.9" cy="886.9" rx="3.4" ry="9" transform="rotate(14 1456.9 886.9)"></ellipse><ellipse cx="1450.4" cy="890.3" rx="2.8" ry="4" transform="rotate(-35 1450.4 890.3)"></ellipse><ellipse cx="1453.6" cy="892.2" rx="4.6" ry="2.6" transform="rotate(28 1453.6 892.2)"></ellipse><circle cx="1451.8" cy="886.4" r="2.4"></circle></g>
</svg>
<div class="a t" style="left: 1480.6px; top: 878.9px; font-size: 13.5px; color: rgb(58, 58, 58); -webkit-text-stroke: 0.15px rgb(58, 58, 58); letter-spacing: -0.27px;">Kubecost 1.103.3</div>
<div class="a" style="left:1389.6px;top:917.3px;width:500.5px;height:53.700000000000045px;background:#fff;box-shadow:0 1px 2px rgba(0,0,0,.10),0 0 3px rgba(0,0,0,.05)"></div>
<svg class="a" style="left:1400px;top:923.3px" width="480" height="40" viewBox="1400 923.3 480 40">
  <circle cx="1418.3" cy="943.3" r="6.6" fill="#1f9a50"></circle>
  <polyline points="1865.3,938.0 1870.6,943.3 1865.3,948.5999999999999" fill="none" stroke="#c5c5c5" stroke-width="1.1"></polyline>
  <g fill="#1b3262"><ellipse cx="1456" cy="941.8" rx="6.8" ry="3.8" transform="rotate(-28 1456 941.8)"></ellipse><circle cx="1451.3" cy="938.6" r="2.8"></circle><path d="M1449.5,941 L1452.8,941 L1451.2,953 Z"></path></g><line x1="1443.3" y1="949.6" x2="1463.5" y2="936.6" stroke="#1b3262" stroke-width=".9"></line><circle cx="1455.5" cy="943" r="1.1" fill="#cfe0f0"></circle>
</svg>
<div class="a t" style="left: 1480.6px; top: 933.9px; font-size: 13.5px; color: rgb(58, 58, 58); -webkit-text-stroke: 0.15px rgb(58, 58, 58); letter-spacing: -0.098px;">Hello Universe 1.2.0</div>
<div class="a" style="left:1388px;top:979px;width:504.7px;height:34.700000000000045px;background:#f0e3f8;box-shadow:inset 0 -1px 0 rgba(0,0,0,.06)"></div>
<svg class="a" style="left:1400px;top:986px" width="24" height="20" viewBox="1400 986 24 20">
  <polyline points="1406,991.4 1411.4,998.2 1416.8,991.4" fill="none" stroke="#555b6a" stroke-width="1.3"></polyline>
</svg>
<svg class="a" style="left:1723.2px;top:987px" width="20" height="18" viewBox="1723.2 987 20 18">
  <g fill="none" stroke="#3a6fd0" stroke-width="1.3" transform="rotate(-35 1732.2 996)">
    <rect x="1725.2" y="993.4" width="8.5" height="5.2" rx="2.6"></rect>
    <rect x="1730.7" y="993.4" width="8.5" height="5.2" rx="2.6"></rect>
  </g>
</svg>
<div class="a" style="left:1748.2px;top:987.6px;width:62.299999999999955px;height:17px;border-radius:8.5px;background:#d3e2e2"></div>
<div class="a t" style="left: 1431.1px; top: 986px; font-size: 10.5px; color: rgb(69, 75, 89); -webkit-text-stroke: 0.5px rgb(69, 75, 89); letter-spacing: 0.092px;">INFRASTRUCTURE PROFILE PROFILE-VARIABLES-AWS</div>
<div class="a t" style="left: 1754.7px; top: 986px; font-size: 11px; color: rgb(38, 50, 68); -webkit-text-stroke: 0.55px rgb(38, 50, 68); letter-spacing: -0.22px;">PROJECT</div>
<div class="a" style="left:1389.6px;top:1015.2px;width:500.5px;height:54.299999999999955px;background:#fff;box-shadow:0 1px 2px rgba(0,0,0,.10),0 0 3px rgba(0,0,0,.05)"></div>
<svg class="a" style="left:1400px;top:1022.5px" width="480" height="40" viewBox="1400 1022.5 480 40">
  <circle cx="1418.3" cy="1042.5" r="6.6" fill="#1f9a50"></circle>
  <polyline points="1865.3,1037.2 1870.6,1042.5 1865.3,1047.8" fill="none" stroke="#c5c5c5" stroke-width="1.1"></polyline>
  <path d="M1443,1045 Q1453.5,1051 1465,1045.3" fill="none" stroke="#f90" stroke-width="1.5"></path><path d="M1462.6,1044.3 L1465.6,1045.2 L1464.8,1048" fill="none" stroke="#f90" stroke-width="1.2"></path>
</svg>
<div class="a t" style="left: 1480.6px; top: 1033.1px; font-size: 13.5px; color: rgb(58, 58, 58); -webkit-text-stroke: 0.15px rgb(58, 58, 58); letter-spacing: -0.27px;">Amazon EBS CSI 1.48.0</div>
<div class="a" style="left:1442px;top:1030px;font-size:13px;line-height:14px;color:#232f3e;font-weight:bold;letter-spacing:-.3px">aws</div>
<div class="a" style="left:1389.6px;top:1071px;width:500.5px;height:54.40000000000009px;background:#fff;box-shadow:0 1px 2px rgba(0,0,0,.10),0 0 3px rgba(0,0,0,.05)"></div>
<svg class="a" style="left:1400px;top:1077.5px" width="480" height="40" viewBox="1400 1077.5 480 40">
  <circle cx="1418.3" cy="1097.5" r="6.6" fill="#1f9a50"></circle>
  <polyline points="1865.3,1092.2 1870.6,1097.5 1865.3,1102.8" fill="none" stroke="#c5c5c5" stroke-width="1.1"></polyline>
  <defs><linearGradient id="calg" x1="0" y1="0" x2="0" y2="1"><stop offset="0" stop-color="#e6f1fa"></stop><stop offset=".55" stop-color="#7aaee0"></stop><stop offset="1" stop-color="#1f5ea8"></stop></linearGradient></defs>
  <circle cx="1453.1" cy="1098" r="14.3" fill="url(#calg)" stroke="#1b2a42" stroke-width="1"></circle>
  <path d="M1461.8,1103.5 Q1463.8,1098 1462.3,1094" fill="none" stroke="#3a2a20" stroke-width="1.6"></path>
  <ellipse cx="1453" cy="1102.3" rx="5.9" ry="6" fill="#f2a033" stroke="#3a2410" stroke-width=".7"></ellipse>
  <ellipse cx="1453.3" cy="1101.6" rx="2.7" ry="3.9" fill="#fff"></ellipse>
  <ellipse cx="1453.2" cy="1089.8" rx="7" ry="6.3" fill="#a8682a" stroke="#3a2410" stroke-width=".7"></ellipse>
  <path d="M1453.2,1083.6 A7,6.3 0 0 1 1460.2,1089.8 A7,6.3 0 0 1 1453.2,1096 Z" fill="#d08a3a"></path>
  <circle cx="1450.8" cy="1089.6" r="1.1" fill="#e8e0d0"></circle>
  <ellipse cx="1453.2" cy="1094.3" rx="3.2" ry="1.5" fill="#fff"></ellipse>
  <circle cx="1465.2" cy="1107.3" r="4.1" fill="#f0843a" stroke="#5a3010" stroke-width=".8"></circle>
</svg>
<div class="a t" style="left: 1480.6px; top: 1088.6px; font-size: 13.5px; color: rgb(58, 58, 58); -webkit-text-stroke: 0.15px rgb(58, 58, 58); letter-spacing: 0.174px;">Calico 3.30.3</div>
<div class="a" style="left:1389.6px;top:1127px;width:500.5px;height:30px;background:#fff;box-shadow:0 1px 2px rgba(0,0,0,.10),0 0 3px rgba(0,0,0,.05)"></div>
<svg class="a" style="left:1445px;top:1134px" width="20" height="8" viewBox="1445 1134 20 8"><path d="M1450,1142 L1453.2,1138.5 L1456.4,1142 Z" fill="#b04ab0"></path></svg>
<div class="a" style="left:1978px;top:1131px;width:11px;height:11px;background:radial-gradient(circle at 0 0, transparent 10.5px, #2b3a30 11.5px)"></div>

</body></html>
